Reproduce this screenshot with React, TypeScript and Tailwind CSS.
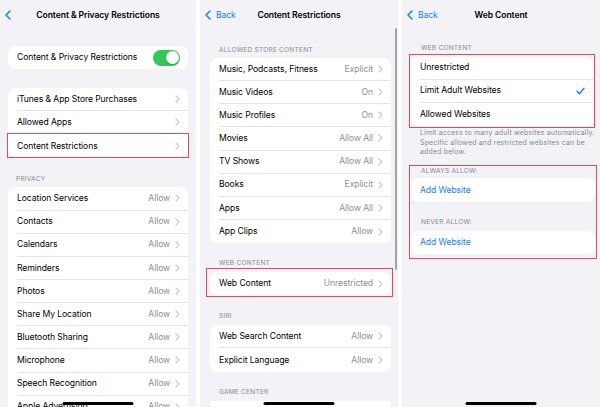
import React from "react";

type RowProps = {
  label: string;
  value?: string;
  chevron?: boolean;
  last?: boolean;
  blue?: boolean;
  check?: boolean;
  highlight?: string;
};

const Chevron = () => (
  <svg width="5" height="8" viewBox="0 0 5 8" className="ml-[5px] shrink-0">
    <path d="M1 1l3 3-3 3" fill="none" stroke="#c7c7cc" strokeWidth="1.1" strokeLinecap="round" strokeLinejoin="round" />
  </svg>
);

const BackChevron = () => (
  <svg width="6" height="10" viewBox="0 0 6 10" className="shrink-0">
    <path d="M5 1L1 5l4 4" fill="none" stroke="#1a7cf5" strokeWidth="1.5" strokeLinecap="round" strokeLinejoin="round" />
  </svg>
);

const Check = () => (
  <svg width="9" height="8" viewBox="0 0 9 8" className="shrink-0">
    <path d="M1 4.3l2.4 2.4L8 1.2" fill="none" stroke="#1a7cf5" strokeWidth="1.4" strokeLinecap="round" strokeLinejoin="round" />
  </svg>
);

function Row({ label, value, chevron = true, last = false, blue = false, check = false, highlight }: RowProps) {
  return (
    <div className="relative flex h-[23.15px] items-center pl-[9px]">
      <div className={`flex h-full flex-1 items-center pr-[8px] ${last ? "" : "border-b border-[#e4e4e8]"}`}>
        <span className={blue ? "text-[#1a7cf5]" : "text-black"}>{label}</span>
        <span className="flex-1" />
        {value && <span className="text-[#8e8e93]">{value}</span>}
        {chevron && <Chevron />}
        {check && <Check />}
      </div>
      {highlight && <div className={`pointer-events-none absolute border-[1.5px] border-[#e2485e] ${highlight}`} />}
    </div>
  );
}

const Card = ({ children, className = "" }: { children?: React.ReactNode; className?: string }) => (
  <div className={`rounded-[8px] bg-white ${className}`}>{children}</div>
);

const Header = ({ children, className = "" }: { children: React.ReactNode; className?: string }) => (
  <div className={`text-[6.6px] leading-[8px] uppercase tracking-[0.03em] text-[#8a8a8e] ${className}`}>{children}</div>
);

function Nav({ title, back }: { title: string; back?: boolean }) {
  return (
    <div className="grid h-[30px] shrink-0 grid-cols-[1fr_auto_1fr] items-center">
      <div className="flex items-center gap-[5px] pl-[5px] text-[#1a7cf5]">
        <BackChevron />
        {back && <span>Back</span>}
      </div>
      <div className="font-semibold text-black">{title}</div>
      <div />
    </div>
  );
}

const HomeBar = () => (
  <div className="absolute bottom-[2px] left-1/2 h-[3px] w-[71px] -translate-x-1/2 rounded-full bg-black" />
);

function PrivacyPanel() {
  const privacy = [
    "Location Services",
    "Contacts",
    "Calendars",
    "Reminders",
    "Photos",
    "Share My Location",
    "Bluetooth Sharing",
    "Microphone",
    "Speech Recognition",
    "Apple Advertising",
  ];
  return (
    <div className="relative flex w-[196px] shrink-0 flex-col overflow-hidden bg-[#f2f2f7]">
      <Nav title="Content & Privacy Restrictions" />
      <Card className="mx-[8px] mt-[16px]">
        <div className="flex h-[23px] items-center pl-[9px] pr-[8px]">
          <span>Content &amp; Privacy Restrictions</span>
          <span className="flex-1" />
          <div className="flex h-[16px] w-[27px] items-center justify-end rounded-full bg-[#34c759] p-[1.5px]">
            <div className="h-[13px] w-[13px] rounded-full bg-white shadow-sm" />
          </div>
        </div>
      </Card>
      <Card className="mx-[8px] mt-[19px]">
        <Row label="iTunes & App Store Purchases" />
        <Row label="Allowed Apps" />
        <Row label="Content Restrictions" last highlight="-inset-[1px]" />
      </Card>
      <Header className="px-[16px] pb-[4px] pt-[18px]">Privacy</Header>
      <Card className="mx-[8px]">
        {privacy.map((p) => (
          <Row key={p} label={p} value="Allow" />
        ))}
      </Card>
      <HomeBar />
    </div>
  );
}

function ContentPanel() {
  const store: [string, string][] = [
    ["Music, Podcasts, Fitness", "Explicit"],
    ["Music Videos", "On"],
    ["Music Profiles", "On"],
    ["Movies", "Allow All"],
    ["TV Shows", "Allow All"],
    ["Books", "Explicit"],
    ["Apps", "Allow All"],
    ["App Clips", "Allow"],
  ];
  return (
    <div className="relative flex w-[198px] shrink-0 flex-col overflow-hidden bg-[#f2f2f7]">
      <Nav title="Content Restrictions" back />
      <Header className="px-[19px] pb-[4px] pt-[16px]">Allowed Store Content</Header>
      <Card className="ml-[10px] mr-[7px]">
        {store.map(([l, v], i) => (
          <Row key={l} label={l} value={v} last={i === store.length - 1} />
        ))}
      </Card>
      <Header className="px-[19px] pb-[5px] pt-[16px]">Web Content</Header>
      <Card className="ml-[10px] mr-[7px]">
        <Row label="Web Content" value="Unrestricted" last highlight="-left-[4px] -right-[2px] -top-[4px] -bottom-[2px]" />
      </Card>
      <Header className="px-[19px] pb-[5px] pt-[17px]">Siri</Header>
      <Card className="ml-[10px] mr-[7px]">
        <Row label="Web Search Content" value="Allow" />
        <Row label="Explicit Language" value="Allow" last />
      </Card>
      <Header className="px-[19px] pb-[5px] pt-[16px]">Game Center</Header>
      <Card className="ml-[10px] mr-[7px] h-[40px]" />
      <div className="absolute right-[1px] top-[28px] h-[242px] w-[2px] rounded-full bg-[#a4a4a8]" />
      <HomeBar />
    </div>
  );
}

function WebPanel() {
  return (
    <div className="relative flex w-[198px] shrink-0 flex-col overflow-hidden bg-[#f2f2f7]">
      <Nav title="Web Content" back />
      <Header className="px-[19px] pb-[2px] pt-[14px]">Web Content</Header>
      <div className="ml-[7px] mr-[5px] border-[1.5px] border-[#e2485e] px-[1px] pb-[1.5px] pt-[1.5px]">
        <Card>
          <Row label="Unrestricted" chevron={false} />
          <Row label="Limit Adult Websites" chevron={false} check />
          <Row label="Allowed Websites" chevron={false} last />
        </Card>
      </div>
      <div className="whitespace-nowrap pl-[18px] text-[6.9px] leading-[9.5px] tracking-[0.03em] text-[#8a8a8e]">
        Limit access to many adult websites automatically.
        <br />
        Specific allowed and restricted websites can be
        <br />
        added below.
      </div>
      <div className="ml-[7px] mr-[3px] mt-[8px] border-[1.5px] border-[#e2485e] px-[1px] pb-[4px] pt-[1.5px]">
        <Header className="px-[10px] pb-[3px]">Always Allow:</Header>
        <Card>
          <Row label="Add Website" chevron={false} blue last />
        </Card>
        <Header className="px-[10px] pb-[5px] pt-[16px]">Never Allow:</Header>
        <Card>
          <Row label="Add Website" chevron={false} blue last />
        </Card>
      </div>
      <HomeBar />
    </div>
  );
}

export default function App() {
  return (
    <div className="flex h-[407px] w-[600px] gap-[4px] overflow-hidden bg-white font-['Inter','Liberation_Sans',sans-serif] text-[8.6px] leading-none tracking-[-0.01em] text-black">
      <PrivacyPanel />
      <ContentPanel />
      <WebPanel />
    </div>
  );
}
